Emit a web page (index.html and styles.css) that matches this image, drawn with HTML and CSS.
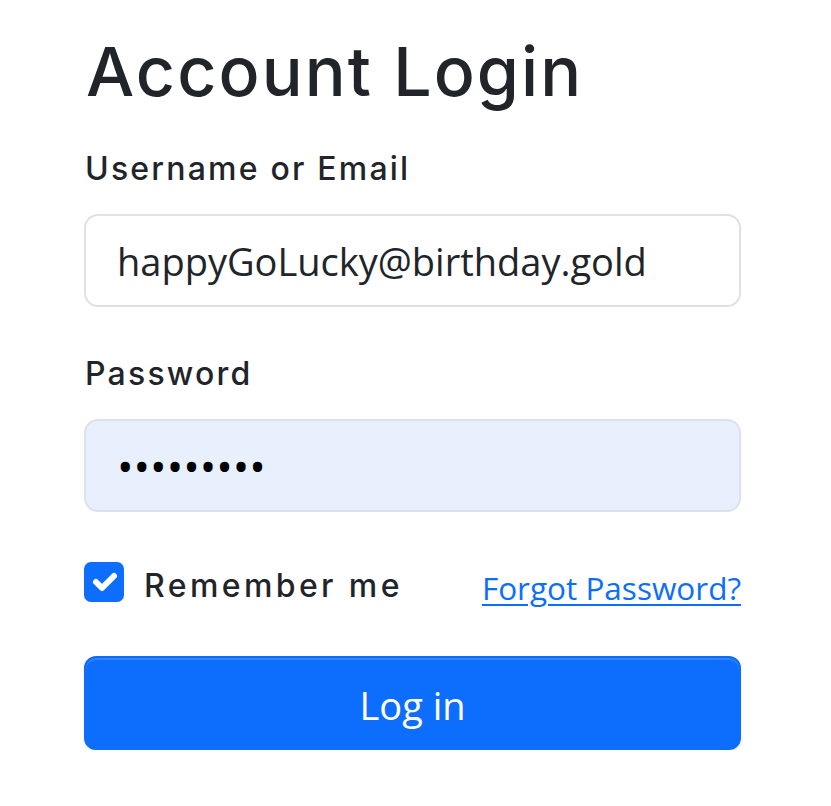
FILE: index.html
```html
<!DOCTYPE html>
<html lang="en">
<head>
<meta charset="utf-8">
<title>Account Login</title>
<link rel="stylesheet" href="styles.css">
</head>
<body>
<main class="login">
  <h1 class="title">Account Login</h1>
  <form class="form">
    <div class="field">
      <label class="field-label" for="user">Username or Email</label>
      <input class="control" id="user" type="text" value="happyGoLucky@birthday.gold">
    </div>
    <div class="field">
      <label class="field-label" for="pass">Password</label>
      <input class="control control-filled" id="pass" type="password" value="123456789">
    </div>
    <div class="options">
      <label class="check">
        <span class="check-box">
          <svg viewBox="0 0 20 20" width="40" height="40"><path d="m6 10 3 3 6-6" fill="none" stroke="#fff" stroke-width="3" stroke-linecap="round" stroke-linejoin="round"/></svg>
        </span>
        <span class="check-text">Remember me</span>
      </label>
      <a class="forgot" href="#">Forgot Password?</a>
    </div>
    <button class="submit" type="button">Log in</button>
  </form>
</main>
</body>
</html>
```
FILE: styles.css
```css
* { box-sizing: border-box; }
html, body { margin: 0; padding: 0; background: #fff; }
body { color: #212529; }
.login {
  width: 831px;
  padding: 31px 90px 0 84px;
}
.title {
  margin: 0;
  font-family: Inter, "Open Sans", sans-serif;
  font-weight: 500;
  font-size: 68px;
  line-height: 80px;
  letter-spacing: 2.1px;
  color: #212529;
  padding-left: 2px;
}
.form { margin-top: 38px; display: flex; flex-direction: column; }
.field { display: flex; flex-direction: column; }
.field + .field { margin-top: 47px; }
.field-label {
  font-family: Inter, "Open Sans", sans-serif;
  font-weight: 500;
  font-size: 32px;
  line-height: 40px;
  letter-spacing: 2.2px;
  margin-bottom: 25px;
  padding-left: 1px;
}
.control {
  height: 93px;
  width: 100%;
  border: 2px solid #dee2e6;
  border-radius: 14px;
  padding: 0 31px;
  font-family: "Open Sans", "Noto Sans", sans-serif;
  font-size: 38px;
  color: #212529;
  background: #fff;
  outline: none;
}
.control-filled {
  background: #e8f0fe;
  border-color: #dce2ea;
  color: #000;
  font-size: 44px;
  letter-spacing: 0;
}
.options {
  margin-top: 50px;
  display: flex;
  align-items: flex-start;
  justify-content: space-between;
}
.check { display: flex; align-items: flex-start; gap: 20px; }
.check-box {
  width: 40px;
  height: 40px;
  border-radius: 7px;
  background: #0d6efd;
  display: block;
}
.check-box svg { display: block; }
.check-text {
  font-family: Inter, "Open Sans", sans-serif;
  font-weight: 500;
  font-size: 32px;
  line-height: 40px;
  letter-spacing: 3.4px;
  margin-top: 4px;
}
.forgot {
  font-family: "Open Sans", "Noto Sans", sans-serif;
  font-size: 31.5px;
  line-height: 40px;
  margin-top: 6px;
  color: #0d6efd;
  text-decoration: underline;
  text-decoration-thickness: 2px;
  text-underline-offset: 4px;
}
.submit {
  margin-top: 48px;
  height: 94px;
  width: 100%;
  border: 2px solid #0d6efd;
  border-radius: 12px;
  background: #0d6efd;
  color: #fff;
  font-family: "Open Sans", "Noto Sans", sans-serif;
  font-size: 38px;
  padding: 4px 0 0;
  box-shadow: inset 0 2px 0 rgba(255,255,255,.15), 0 2px 3px rgba(0,0,0,.075);
}
```
